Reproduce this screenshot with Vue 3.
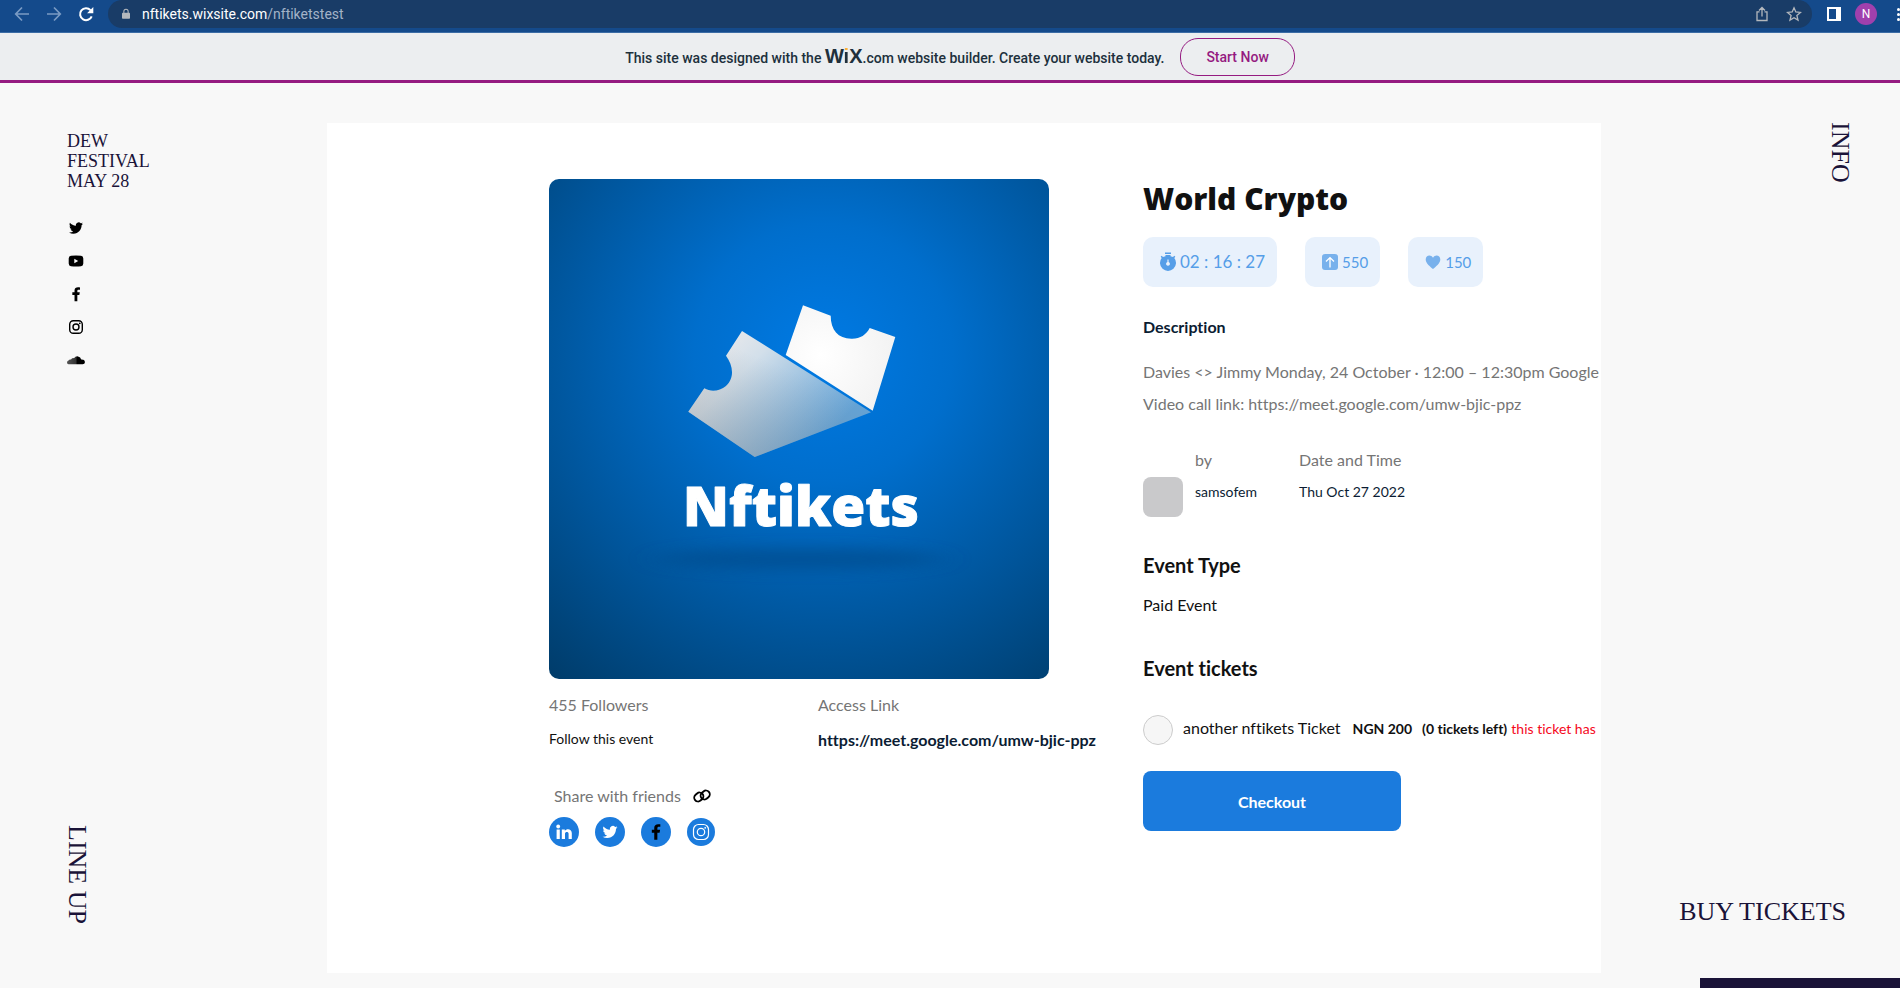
<script setup>
const TWITTER =
  'M23.953 4.57a10 10 0 01-2.825.775 4.958 4.958 0 002.163-2.723c-.951.555-2.005.959-3.127 1.184a4.92 4.92 0 00-8.384 4.482C7.69 8.095 4.067 6.13 1.64 3.162a4.822 4.822 0 00-.666 2.475c0 1.71.87 3.213 2.188 4.096a4.904 4.904 0 01-2.228-.616v.06a4.923 4.923 0 003.946 4.827 4.996 4.996 0 01-2.212.085 4.936 4.936 0 004.604 3.417 9.867 9.867 0 01-6.102 2.105c-.39 0-.779-.023-1.17-.067a13.995 13.995 0 007.557 2.209c9.053 0 13.998-7.496 13.998-13.985 0-.21 0-.42-.015-.63A9.935 9.935 0 0024 4.59z'
const FACEBOOK =
  'M14 13.5h3l.7-4H14v-2c0-1.2.5-2 2-2h2V2.1c-.5-.06-1.7-.1-2.9-.1C11.900 2 9.800 3.657 9.800 6.700v2.800H6.500v4h3.300V23H14z'
</script>

<template>
  <div class="screen">
    <header class="toolbar">
      <nav class="history" aria-label="Browser">
        <button type="button" aria-label="Back" class="dim">
          <svg viewBox="0 0 16 16"><path d="M15 8H2M8 1.500 1.700 8 8 14.500" /></svg>
        </button>
        <button type="button" aria-label="Forward" class="dim">
          <svg viewBox="0 0 16 16"><path d="M1 8h13M8 1.500 14.300 8 8 14.500" /></svg>
        </button>
        <button type="button" aria-label="Reload" class="bright">
          <svg viewBox="0 0 16 16"><path d="M13.700 10.300A6 6 0 1 1 12.500 4.100" /><path class="solid" d="M15.300 1v6.200H9.100z" /></svg>
        </button>
      </nav>
      <div class="address">
        <svg class="lock" viewBox="0 0 10 13"><path d="M1 5h8a1 1 0 0 1 1 1v5.500a1 1 0 0 1-1 1H1a1 1 0 0 1-1-1V6a1 1 0 0 1 1-1z" fill="#b4b8bd" /><path d="M2.300 5.500V3.300a2.700 2.700 0 0 1 5.400 0v2.200" fill="none" stroke="#b4b8bd" stroke-width="1.300" /></svg>
        <span class="url">nftikets.wixsite.com<span>/nftiketstest</span></span>
        <button type="button" aria-label="Share" class="tool">
          <svg viewBox="0 0 16 16"><path d="M5.500 5.800H3v8.700h10V5.800h-2.500M8 10.500V1.700M5 4.500l3-3 3 3" /></svg>
        </button>
        <button type="button" aria-label="Bookmark" class="tool">
          <svg viewBox="0 0 16 16"><path d="m8 1.800 1.800 4.200 4.700.4-3.600 3.100 1.100 4.600L8 11.700l-4 2.400 1.100-4.600-3.600-3.100 4.700-.4z" /></svg>
        </button>
      </div>
      <button type="button" class="panel" aria-label="Side panel"></button>
      <button type="button" class="profile">N</button>
      <button type="button" class="more" aria-label="More"><i></i><i></i><i></i></button>
    </header>

    <div class="banner">
      <p>This site was designed with the <span class="wix">W<span>i</span>X</span>.com website builder. Create your website today.</p>
      <a href="#" class="start">Start Now</a>
    </div>

    <div class="page">
      <aside class="side left">
        <h2 class="festival">DEW<br />FESTIVAL<br />MAY 28</h2>
        <nav class="social" aria-label="Social">
          <a href="#" aria-label="Twitter"><svg viewBox="0 0 24 24" width="14" height="14"><path :d="TWITTER" /></svg></a>
          <a href="#" aria-label="YouTube"><svg viewBox="0 0 16 12" width="16" height="12"><path fill-rule="evenodd" d="M3 .8Q8 .3 13 .8 15.200 1 15.300 3.500v5q-.1 2.500-2.300 2.700-5 .5-10 0Q.8 11 .7 8.500v-5Q.8 1 3 .8zM6.300 3.800v4.400L10.200 6z" /></svg></a>
          <a href="#" aria-label="Facebook"><svg viewBox="0 0 24 24" width="16" height="16"><path :d="FACEBOOK" /></svg></a>
          <a href="#" aria-label="Instagram"><svg viewBox="0 0 16 16" width="16" height="16"><g fill="none" stroke="#000" stroke-width="1.400"><rect x="1.700" y="1.700" width="12.600" height="12.600" rx="3.600" /><circle cx="8" cy="8" r="3" /></g><circle cx="11.800" cy="4.300" r=".9" /></svg></a>
          <a href="#" aria-label="SoundCloud"><svg viewBox="0 0 18 9" width="18" height="9"><defs><linearGradient id="cloud"><stop offset="0" stop-color="#555" /><stop offset=".5" stop-color="#333" /><stop offset=".56" stop-color="#000" /></linearGradient></defs><path fill="url(#cloud)" d="M1.500 8.300Q0 8 0 6.500t1.500-2Q2.500 3 4 3.600 5 1.500 7 2.200 8.500 0 11 .4q2.700.4 3.200 3.200 3.500-.3 3.800 2.300-.2 2.300-2.300 2.400z" /></svg></a>
        </nav>
        <a href="#" class="display vertical lineup">LINE UP</a>
      </aside>

      <main class="card">
        <section class="visual">
          <svg class="poster" viewBox="0 0 500 500" role="img" aria-label="Nftikets">
            <defs>
              <radialGradient id="bg" gradientUnits="userSpaceOnUse" cx="274" cy="174" r="430">
                <stop offset="0" stop-color="#007ae4" />
                <stop offset=".3" stop-color="#006ecc" />
                <stop offset=".65" stop-color="#00559b" />
                <stop offset="1" stop-color="#003b68" />
              </radialGradient>
              <linearGradient id="fold" gradientUnits="userSpaceOnUse" x1="160" y1="170" x2="262" y2="272">
                <stop offset="0" stop-color="#e9e9eb" />
                <stop offset=".28" stop-color="#d2dfea" />
                <stop offset="1" stop-color="#64a3d6" />
              </linearGradient>
              <linearGradient id="shade" gradientUnits="userSpaceOnUse" x1="238" y1="190" x2="200" y2="280">
                <stop offset="0" stop-color="#777" stop-opacity="0" />
                <stop offset="1" stop-color="#888" stop-opacity=".35" />
              </linearGradient>
              <radialGradient id="paper" gradientUnits="userSpaceOnUse" cx="272" cy="176" r="90">
                <stop offset="0" stop-color="#fff" />
                <stop offset="1" stop-color="#f0f0f0" />
              </radialGradient>
              <filter id="soft" x="-20%" y="-150%" width="140%" height="400%"><feGaussianBlur stdDeviation="16 7" /></filter>
            </defs>
            <rect width="500" height="500" fill="url(#bg)" />
            <ellipse cx="251" cy="380" rx="142" ry="11" fill="#004a88" opacity=".6" filter="url(#soft)" />
            <path fill="url(#paper)" d="M254 126.300 281.700 136.700C281.700 151 289 159.500 302.300 159.700 311 160 317 156 320.700 149L346.300 158 323.700 231.700 236.700 176z" />
            <path fill="url(#fold)" d="M193 152 322 233.300 205.700 278 139.300 232.700 155.300 209.300C162 213.500 171 212 177 207 186 199 184 186 177 176.700z" />
            <path fill="url(#shade)" d="M193 152 322 233.300 205.700 278 139.300 232.700 155.300 209.300C162 213.500 171 212 177 207 186 199 184 186 177 176.700z" />
            <text x="252" y="347" text-anchor="middle">Nftikets</text>
          </svg>

          <div class="facts">
            <div>
              <p class="label">455 Followers</p>
              <button type="button" class="follow">Follow this event</button>
            </div>
            <div>
              <p class="label">Access Link</p>
              <a href="#" class="access">https://meet.google.com/umw-bjic-ppz</a>
            </div>
          </div>

          <div class="share">
            <span class="label">Share with friends</span>
            <button type="button" aria-label="Copy link">
              <svg viewBox="0 0 18 18" width="18" height="18"><g fill="none" stroke="#000" stroke-width="1.900"><rect x="1" y="6.200" width="9.600" height="7.600" rx="3.800" transform="rotate(-40 5.800 10)" /><rect x="7.400" y="4.200" width="9.600" height="7.600" rx="3.800" transform="rotate(-40 12.200 8)" /></g></svg>
            </button>
          </div>
          <div class="networks">
            <a href="#" aria-label="LinkedIn"><svg viewBox="0 0 30 30"><g fill="#fff"><circle cx="9.200" cy="9.500" r="1.900" /><path d="M7.600 12.400h3.200V22H7.600zM12.800 12.400h3v1.400c1.800-2.700 7-2.200 7 2.300V22h-3.200v-5.200c0-2.600-3.600-2.500-3.600 0V22h-3.200z" /></g></svg></a>
            <a href="#" aria-label="Twitter"><svg viewBox="0 0 30 30"><path fill="#fff" transform="translate(7.500 7.500) scale(.625)" :d="TWITTER" /></svg></a>
            <a href="#" aria-label="Facebook"><svg viewBox="0 0 30 30"><path transform="translate(6 5.800) scale(.74)" :d="FACEBOOK" /></svg></a>
            <a href="#" aria-label="Instagram" class="small"><svg viewBox="0 0 28 28"><g fill="none" stroke="#fff" stroke-width="1.200"><rect x="6.500" y="6.500" width="15" height="15" rx="5" /><circle cx="14" cy="14" r="3.700" /></g><circle cx="18.200" cy="9.800" r=".9" fill="#fff" /></svg></a>
          </div>
        </section>

        <section class="details">
          <h1>World Crypto</h1>
          <div class="badges">
            <span class="badge timer">
              <svg viewBox="0 0 16 20" width="16" height="20"><path fill="#559ee8" fill-rule="evenodd" d="M5 .5h6V2H5zM5.500 3h5v1.200l2.500.7 1.300-1.200 1 1-1 1.300A8 8 0 1 1 1.700 6l-1-1.300 1-1L3 4.900l2.500-.7zM7.400 7.500v2.600a1.900 1.900 0 1 0 1.200 0V7.500z" /></svg>
              02 : 16 : 27
            </span>
            <span class="badge">
              <svg viewBox="0 0 16 16" width="16" height="16"><rect width="16" height="16" rx="3" fill="#78b1ec" /><path d="M8 13.500V4M4 7.500 8 3.600l4 3.900" fill="none" stroke="#fff" stroke-width="1.300" /></svg>
              550
            </span>
            <span class="badge">
              <svg viewBox="0 0 16 16" width="16" height="16"><path fill="#78b1ec" d="M8 15C5.500 12.800.7 9.300.7 5.400.7 1 6 .2 8 3.700 10 .2 15.300 1 15.300 5.400 15.300 9.300 10.500 12.800 8 15z" /></svg>
              150
            </span>
          </div>

          <h3>Description</h3>
          <p class="body">Davies &lt;&gt; Jimmy Monday, 24 October · 12:00 – 12:30pm Google Meet joining info</p>
          <p class="body">Video call link: https://meet.google.com/umw-bjic-ppz</p>

          <div class="meta">
            <span class="avatar"></span>
            <div class="by">
              <p class="label">by</p>
              <p class="value">samsofem</p>
            </div>
            <div>
              <p class="label">Date and Time</p>
              <p class="value">Thu Oct 27 2022</p>
            </div>
          </div>

          <h2 class="type">Event Type</h2>
          <p class="paid">Paid Event</p>
          <h2 class="tickets">Event tickets</h2>

          <div class="ticket">
            <input id="ticket" type="radio" name="ticket" />
            <label for="ticket">another nftikets Ticket <b class="price">NGN 200</b><b class="stock">(0 tickets left)</b> <em>this ticket has</em></label>
          </div>
          <button type="button" class="checkout">Checkout</button>
        </section>
      </main>

      <aside class="side right">
        <a href="#" class="display vertical info">INFO</a>
        <a href="#" class="display buy">BUY TICKETS</a>
      </aside>
      <div class="chat"></div>
    </div>
  </div>
</template>

<style>
body {
  margin: 0;
  overflow: hidden;
}
</style>

<style scoped>
.screen {
  display: flex;
  flex-direction: column;
  height: 100vh;
  overflow: hidden;
  background: #f8f8f8;
  color: #111;
  font-family: Lato, "Open Sans", sans-serif;
  font-variant-ligatures: none;
}
h1, h2, h3, p { margin: 0; }
a { color: inherit; text-decoration: none; }
button { border: 0; padding: 0; background: none; font: inherit; color: inherit; }
svg { display: block; }

.toolbar {
  display: flex;
  align-items: center;
  flex: none;
  height: 32px;
  padding-left: 14px;
  border-bottom: 1px solid #3b6ca5;
  background: #144a8b;
  font-family: Roboto, sans-serif;
  overflow: hidden;
}
.history { display: flex; gap: 16px; margin: 0 14px 4px 0; }
.history svg, .tool svg { width: 16px; height: 16px; fill: none; stroke: currentColor; stroke-width: 1.700; }
.history .solid { fill: currentColor; stroke: none; }
.dim { color: #7a9bc4; }
.bright { color: #fff; }
.bright svg { stroke-width: 2; }
.address {
  display: flex;
  align-items: center;
  flex: 1;
  height: 28px;
  margin-bottom: 4px;
  padding: 0 10px 0 14px;
  border-radius: 14px;
  background: #193c67;
}
.lock { width: 8px; height: 12px; margin-right: 12px; }
.url { flex: 1; color: #fff; font-size: 14px; line-height: 20px; }
.url span { color: #a3b3c8; }
.tool { margin-left: 16px; color: #b4b8bd; }
.tool svg { stroke-width: 1.300; }
.panel {
  box-sizing: border-box;
  width: 14px;
  height: 14px;
  margin: 0 14px 4px 15px;
  border: 2px solid #fff;
  border-right-width: 5px;
}
.profile {
  width: 22px;
  height: 22px;
  margin: 0 20px 4px 0;
  border-radius: 50%;
  background: #a040ad;
  color: #fff;
  font-size: 12px;
}
.more { display: grid; gap: 2px; width: 3px; margin-bottom: 4px; }
.more i { width: 3px; height: 3px; border-radius: 50%; background: #fff; }

.banner {
  display: flex;
  align-items: center;
  justify-content: center;
  gap: 16px;
  flex: none;
  height: 47px;
  padding-left: 20px;
  border-bottom: 3px solid #951b81;
  background: #eceef0;
  color: #20303c;
  font: 500 14px/20px Roboto, sans-serif;
}
.wix { font: 700 20px/20px "Liberation Sans", sans-serif; }
.wix span {
  background: linear-gradient(#fbb03b 6px, #20303c 6px);
  background-clip: text;
  color: transparent;
}
.start {
  box-sizing: border-box;
  padding: 8px 25px;
  border: 1px solid #951b81;
  border-radius: 18px;
  color: #951b81;
}

.page {
  position: relative;
  display: grid;
  grid-template-columns: 327px minmax(0, 1fr) 299px;
  flex: 1;
  min-height: 0;
  color: #111;
}
.side { display: flex; flex-direction: column; color: #1a1338; font-family: "Liberation Serif", serif; }
.left { align-items: flex-start; padding: 48px 0 64px 67px; }
.right { align-items: flex-end; justify-content: space-between; padding: 39px 48px 60px 0; }
.festival { font-size: 18px; line-height: 20px; font-weight: 400; }
.social { display: grid; gap: 13px; margin-top: 27px; }
.social a { display: grid; place-items: center; width: 18px; height: 20px; }
.display { font-size: 26px; line-height: 32px; }
.vertical { writing-mode: vertical-rl; line-height: 20px; }
.lineup { margin-top: auto; }
.info { margin-right: 2px; }
.buy { margin-right: 6px; }
.chat { position: absolute; right: 0; bottom: 0; width: 200px; height: 10px; background: #1a1338; }

.card {
  display: grid;
  grid-template-columns: 500px minmax(0, 1fr);
  gap: 94px;
  align-items: start;
  margin: 40px 0 15px;
  padding: 56px 0 0 222px;
  background: #fff;
  overflow: hidden;
}
.poster { width: 100%; border-radius: 10px; }
.poster text {
  fill: #fff;
  stroke: #fff;
  stroke-width: 1px;
  stroke-linejoin: round;
  font: 800 55px "Open Sans", sans-serif;
}
.label { color: #757575; font-size: 16px; line-height: 20px; white-space: nowrap; }
.facts { display: grid; grid-template-columns: 269px 1fr; margin-top: 16px; }
.facts .label { margin-bottom: 14px; }
.follow { display: block; font-size: 14px; line-height: 20px; }
.access { display: block; color: #0b1c33; font-size: 16px; line-height: 22px; font-weight: 700; white-space: nowrap; }
.share { display: flex; align-items: center; gap: 12px; height: 24px; margin: 33px 0 9px 5px; }
.networks { display: flex; align-items: center; gap: 16px; }
.networks a { width: 30px; height: 30px; border-radius: 50%; background: #1b7bdd; }
.networks .small { width: 28px; height: 28px; }

h1 { font: 800 30px/40px "Open Sans", sans-serif; }
.badges { display: flex; gap: 28px; margin-top: 18px; }
.badge {
  box-sizing: border-box;
  display: flex;
  align-items: center;
  gap: 4px;
  height: 50px;
  padding: 0 12px 0 17px;
  border-radius: 10px;
  background: #e8f1fc;
  color: #559ee8;
  font-size: 15px;
  line-height: 20px;
  white-space: nowrap;
}
.timer { font-size: 17px; }
h3 { margin: 29px 0 18px; color: #0b1c33; font-size: 16px; line-height: 22px; }
.body { color: #757575; font-size: 16px; line-height: 32px; white-space: nowrap; }
.meta { display: flex; margin-top: 26px; }
.avatar { width: 40px; height: 40px; margin: 31px 12px 0 0; border-radius: 8px; background: #c9c9cb; }
.by { width: 104px; }
.meta .label { margin-top: 4px; }
.value { margin-top: 12px; color: #0b1c33; font-size: 14px; line-height: 20px; }
h2.type, h2.tickets { font-size: 20px; line-height: 26px; }
.type { margin-top: 35px; }
.paid { margin-top: 17px; font-size: 16px; line-height: 20px; }
.tickets { margin-top: 40px; }
.ticket { display: flex; margin-top: 34px; }
.ticket input {
  appearance: none;
  flex: none;
  box-sizing: border-box;
  width: 30px;
  height: 30px;
  margin: 0 10px 0 0;
  border: 1px solid #ccc;
  border-radius: 50%;
  background: #f6f6f6;
}
.ticket label { font-size: 16px; line-height: 26px; white-space: nowrap; }
.ticket b, .ticket em { font-size: 14px; }
.ticket .price { margin-left: 8px; }
.ticket .stock { margin-left: 10px; }
.ticket em { color: #f5081d; font-style: normal; }
.checkout {
  display: block;
  width: 258px;
  height: 60px;
  margin-top: 26px;
  border-radius: 8px;
  background: #1b7bdd;
  color: #fff;
  font-size: 16px;
  font-weight: 700;
}
</style>
